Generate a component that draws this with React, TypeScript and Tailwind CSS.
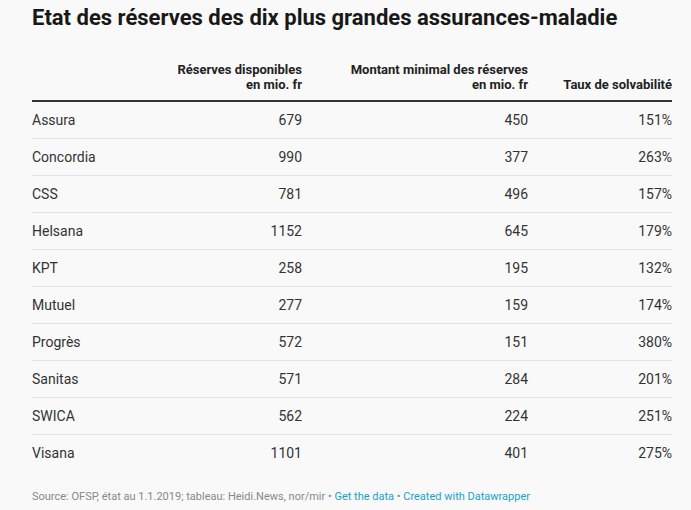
const rows = [
  { name: "Assura", dispo: "679", min: "450", taux: "151%" },
  { name: "Concordia", dispo: "990", min: "377", taux: "263%" },
  { name: "CSS", dispo: "781", min: "496", taux: "157%" },
  { name: "Helsana", dispo: "1152", min: "645", taux: "179%" },
  { name: "KPT", dispo: "258", min: "195", taux: "132%" },
  { name: "Mutuel", dispo: "277", min: "159", taux: "174%" },
  { name: "Progrès", dispo: "572", min: "151", taux: "380%" },
  { name: "Sanitas", dispo: "571", min: "284", taux: "201%" },
  { name: "SWICA", dispo: "562", min: "224", taux: "251%" },
  { name: "Visana", dispo: "1101", min: "401", taux: "275%" },
];

export default function App() {
  return (
    <div className="w-[691px] h-[510px] bg-[#f9f9f9] px-8 text-[#333] font-['Roboto',sans-serif] overflow-hidden">
      <h1 className="pt-[6px] text-[22px] leading-[24px] font-bold text-[#181818]">
        Etat des réserves des dix plus grandes assurances-maladie
      </h1>

      <table className="mt-[21px] w-[640px] border-collapse table-fixed">
        <colgroup>
          <col className="w-[128px]" />
          <col className="w-[142px]" />
          <col className="w-[226px]" />
          <col className="w-[144px]" />
        </colgroup>
        <thead>
          <tr className="border-b-2 border-[#333]">
            <th className="h-[50px]"></th>
            <th className="align-bottom pb-[8px] text-right text-[13px] leading-[15px] font-bold text-[#222]">
              Réserves disponibles
              <br />
              en mio. fr
            </th>
            <th className="align-bottom pb-[8px] text-right text-[13px] leading-[15px] font-bold text-[#222]">
              Montant minimal des réserves
              <br />
              en mio. fr
            </th>
            <th className="align-bottom pb-[8px] text-right text-[13px] leading-[15px] font-bold text-[#222]">
              Taux de solvabilité
            </th>
          </tr>
        </thead>
        <tbody>
          {rows.map((r, i) => (
            <tr
              key={r.name}
              className={i < rows.length - 1 ? "border-b border-[#e4e4e4]" : ""}
            >
              <td className="h-[37px] text-[14px] leading-[16px] text-left">{r.name}</td>
              <td className="text-[14px] leading-[16px] text-right">{r.dispo}</td>
              <td className="text-[14px] leading-[16px] text-right">{r.min}</td>
              <td className="text-[14px] leading-[16px] text-right">{r.taux}</td>
            </tr>
          ))}
        </tbody>
      </table>

      <div className="mt-[19px] text-[11px] leading-[14px] text-[#888]">
        Source: OFSP, état au 1.1.2019; tableau: Heidi.News, nor/mir •{" "}
        <span className="text-[#18a1cd]">Get the data</span> •{" "}
        <span className="text-[#18a1cd]">Created with Datawrapper</span>
      </div>
    </div>
  );
}
